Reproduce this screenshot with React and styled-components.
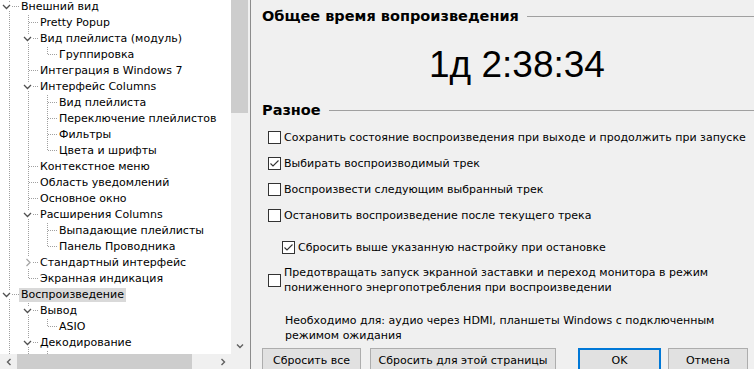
import React from 'react';
import styled, { createGlobalStyle } from 'styled-components';

const Global = createGlobalStyle`
  html, body { margin: 0; padding: 0; width: 754px; height: 369px; overflow: hidden; background: #f0f0f0; }
  body { font-family: "DejaVu Sans", "Noto Sans", sans-serif; font-size: 11px; color: #000; }
  #root { width: 754px; height: 369px; }
`;

const Window = styled.div`
  display: flex;
  width: 754px;
  height: 369px;
  overflow: hidden;
`;

/* ---------- tree ---------- */
const TreeFrame = styled.div`
  flex: none;
  width: 248px;
  display: grid;
  grid-template-columns: 231px 17px;
  grid-template-rows: 354px 15px;
  padding-right: 2px;
  border-right: 1px solid #8c8c8c;
  background: #f0f0f0;
`;

const TreeView = styled.div`
  background: #fff;
  overflow: hidden;
`;

const TreeList = styled.div`
  margin-top: -1px;
  display: flex;
  flex-direction: column;
`;

const Row = styled.div`
  display: flex;
  align-items: center;
  height: 16px;
  white-space: nowrap;
`;

const Label = styled.span`
  padding: 0 2px;
  line-height: 14px;
  background: ${p => (p.$selected ? '#d9d9d9' : 'transparent')};
`;

const GuideSvg = styled.svg`
  flex: none;
  display: block;
  width: 19px;
  height: 16px;
`;

const DOT = '#a0a0a0';

function Guide({ kind, down, chevron, root }) {
  const cx = root ? -2 : 0;
  return (
    <GuideSvg viewBox="0 0 19 16" shapeRendering="crispEdges">
      {kind === 'pass' && (
        <line x1="9.5" y1="0" x2="9.5" y2="16" stroke={DOT} strokeDasharray="1 1" />
      )}
      {kind === 'node' && (
        <>
          <line x1="9.5" y1="0" x2="9.5" y2={down ? 16 : 8} stroke={DOT} strokeDasharray="1 1" />
          <line x1="10" y1="7.5" x2="19" y2="7.5" stroke={DOT} strokeDasharray="1 1" />
        </>
      )}
      {chevron === 'open' && (
        <g transform={`translate(${cx} 0)`}>
          <rect x="3" y="4" width="11" height="8" fill="#fff" />
          <path d="M5 6 L8.5 9.5 L12 6" fill="none" stroke="#505050" strokeWidth="1.3" shapeRendering="geometricPrecision" />
        </g>
      )}
      {chevron === 'closed' && (
        <>
          <rect x="5" y="2" width="9" height="12" fill="#fff" />
          <path d="M7.5 4 L11 7.5 L7.5 11" fill="none" stroke="#a6a6a6" strokeWidth="1.3" shapeRendering="geometricPrecision" />
        </>
      )}
    </GuideSvg>
  );
}

const treeData = [
  { label: 'Внешний вид', level: 0, chevron: 'open' },
  { label: 'Pretty Popup', level: 1 },
  { label: 'Вид плейлиста (модуль)', level: 1, chevron: 'open' },
  { label: 'Группировка', level: 2 },
  { label: 'Интеграция в Windows 7', level: 1 },
  { label: 'Интерфейс Columns', level: 1, chevron: 'open' },
  { label: 'Вид плейлиста', level: 2 },
  { label: 'Переключение плейлистов', level: 2 },
  { label: 'Фильтры', level: 2 },
  { label: 'Цвета и шрифты', level: 2 },
  { label: 'Контекстное меню', level: 1 },
  { label: 'Область уведомлений', level: 1 },
  { label: 'Основное окно', level: 1 },
  { label: 'Расширения Columns', level: 1, chevron: 'open' },
  { label: 'Выпадающие плейлисты', level: 2 },
  { label: 'Панель Проводника', level: 2 },
  { label: 'Стандартный интерфейс', level: 1, chevron: 'closed' },
  { label: 'Экранная индикация', level: 1 },
  { label: 'Воспроизведение', level: 0, chevron: 'open', selected: true },
  { label: 'Вывод', level: 1, chevron: 'open' },
  { label: 'ASIO', level: 2 },
  { label: 'Декодирование', level: 1, chevron: 'open' },
  { label: '', level: 2 },
];

// a node "continues" if a later sibling follows; the list runs on past the view
function hasNext(i) {
  const L = treeData[i].level;
  for (let j = i + 1; j < treeData.length; j++) {
    if (treeData[j].level === L) return true;
    if (treeData[j].level < L) return false;
  }
  return true;
}

const rows = treeData.map((item, i) => {
  const guides = [];
  for (let d = 0; d < item.level; d++) {
    let a = i;
    while (a >= 0 && treeData[a].level !== d) a--;
    guides.push(a >= 0 && hasNext(a) ? 'pass' : 'blank');
  }
  return { ...item, guides, down: hasNext(i) };
});

/* ---------- scrollbars ---------- */
const VScroll = styled.div`
  display: flex;
  flex-direction: column;
  background: #f0f0f0;
`;

const Thumb = styled.div`
  background: #cdcdcd;
  flex: none;
`;

const Track = styled.div`
  flex: 1;
  background: #f0f0f0;
`;

const Arrow = styled.div`
  flex: none;
  width: 17px;
  height: 17px;
  display: flex;
  align-items: center;
  justify-content: center;
`;

const HScroll = styled.div`
  display: flex;
  align-items: stretch;
  background: #f0f0f0;
  height: 15px;
`;

const HArrow = styled.div`
  flex: none;
  width: 17px;
  display: flex;
  align-items: center;
  justify-content: center;
`;

const Corner = styled.div`
  background: #f0f0f0;
`;

function ArrowGlyph({ dir }) {
  const d = {
    down: 'M1 1.5 L4 4.5 L7 1.5',
    left: 'M4.5 1 L1.5 4 L4.5 7',
    right: 'M1.5 1 L4.5 4 L1.5 7',
  }[dir];
  const vb = dir === 'down' ? '0 0 8 6' : '0 0 6 8';
  const w = dir === 'down' ? 8 : 6;
  const h = dir === 'down' ? 6 : 8;
  return (
    <svg width={w} height={h} viewBox={vb}>
      <path d={d} fill="none" stroke="#606060" strokeWidth="1.4" />
    </svg>
  );
}

/* ---------- right panel ---------- */
const Panel = styled.div`
  flex: 1;
  min-width: 0;
  display: flex;
  flex-direction: column;
  padding: 7px 0 0 11px;
`;

const SectionTitle = styled.div`
  display: flex;
  align-items: center;
  gap: 8px;
  font-weight: bold;
  font-size: 14.5px;
  line-height: 18px;
  margin-top: ${p => p.$top || 0}px;
  white-space: nowrap;
  &::after {
    content: '';
    flex: 1;
    height: 1px;
    background: #a0a0a0;
  }
`;

const TimeDisplay = styled.div`
  margin-top: 18px;
  padding-left: 18px;
  text-align: center;
  font-family: "Liberation Sans", Arial, sans-serif;
  font-size: 37px;
  line-height: 43px;
`;

const Option = styled.label`
  display: flex;
  align-items: center;
  gap: 3px;
  margin-top: ${p => p.$top || 0}px;
  padding-left: ${p => 6 + (p.$indent || 0)}px;
  height: ${p => (p.$multi ? 'auto' : '26px')};
  line-height: 15px;
`;

const Box = styled.span`
  flex: none;
  width: 13px;
  height: 13px;
  box-sizing: border-box;
  border: 1px solid #333;
  background: #fff;
  display: flex;
  align-items: center;
  justify-content: center;
`;

function CheckBox({ checked }) {
  return (
    <Box>
      {checked && (
        <svg width="11" height="11" viewBox="0 0 11 11">
          <path d="M1.5 5.5 L4 8 L9.5 2.5" fill="none" stroke="#333" strokeWidth="1.1" />
        </svg>
      )}
    </Box>
  );
}

const Note = styled.div`
  margin-top: 18px;
  padding-left: 23px;
  padding-right: 20px;
  line-height: 15px;
`;

const Footer = styled.div`
  margin-top: auto;
  display: flex;
  align-items: flex-start;
  height: 21px;
`;

const Button = styled.div`
  box-sizing: border-box;
  flex: none;
  width: ${p => p.$w}px;
  margin-left: ${p => p.$gap || 0}px;
  height: 24px;
  display: flex;
  align-items: center;
  justify-content: center;
  background: #e1e1e1;
  border: 1px solid ${p => (p.$default ? '#0078d7' : '#adadad')};
  box-shadow: ${p => (p.$default ? 'inset 0 0 0 1px #0078d7' : 'none')};
  padding-top: 1px;
`;

export default function App() {
  return (
    <>
      <Global />
      <Window>
        <TreeFrame>
          <TreeView>
            <TreeList>
              {rows.map((r, i) => (
                <Row key={i}>
                  {r.guides.map((g, k) => (
                    <Guide key={k} kind={g} />
                  ))}
                  <Guide kind="node" down={r.down} chevron={r.chevron} root={r.level === 0} />
                  <Label $selected={r.selected}>{r.label}</Label>
                </Row>
              ))}
            </TreeList>
          </TreeView>
          <VScroll>
            <Thumb style={{ height: 113 }} />
            <Track />
            <Arrow>
              <ArrowGlyph dir="down" />
            </Arrow>
          </VScroll>
          <HScroll>
            <HArrow>
              <ArrowGlyph dir="left" />
            </HArrow>
            <Thumb style={{ width: 175 }} />
            <Track />
            <HArrow>
              <ArrowGlyph dir="right" />
            </HArrow>
          </HScroll>
          <Corner />
        </TreeFrame>

        <Panel>
          <SectionTitle>Общее время вопроизведения</SectionTitle>
          <TimeDisplay>1д 2:38:34</TimeDisplay>
          <SectionTitle $top={15}>Разное</SectionTitle>
          <Option $top={5}>
            <CheckBox />
            Сохранить состояние воспроизведения при выходе и продолжить при запуске
          </Option>
          <Option>
            <CheckBox checked />
            Выбирать воспроизводимый трек
          </Option>
          <Option>
            <CheckBox />
            Воспроизвести следующим выбранный трек
          </Option>
          <Option>
            <CheckBox />
            Остановить воспроизведение после текущего трека
          </Option>
          <Option $top={6} $indent={14}>
            <CheckBox checked />
            Сбросить выше указанную настройку при остановке
          </Option>
          <Option $top={5} $multi>
            <CheckBox />
            <span>
              Предотвращать запуск экранной заставки и переход монитора в режим
              <br />
              пониженного энергопотребления при воспроизведении
            </span>
          </Option>
          <Note>
            Необходимо для: аудио через HDMI, планшеты Windows с подключенным
            <br />
            режимом ожидания
          </Note>
          <Footer>
            <Button $w={99}>Сбросить все</Button>
            <Button $w={186} $gap={9}>Сбросить для этой страницы</Button>
            <Button $w={83} $gap={22} $default>OK</Button>
            <Button $w={80} $gap={7}>Отмена</Button>
          </Footer>
        </Panel>
      </Window>
    </>
  );
}
